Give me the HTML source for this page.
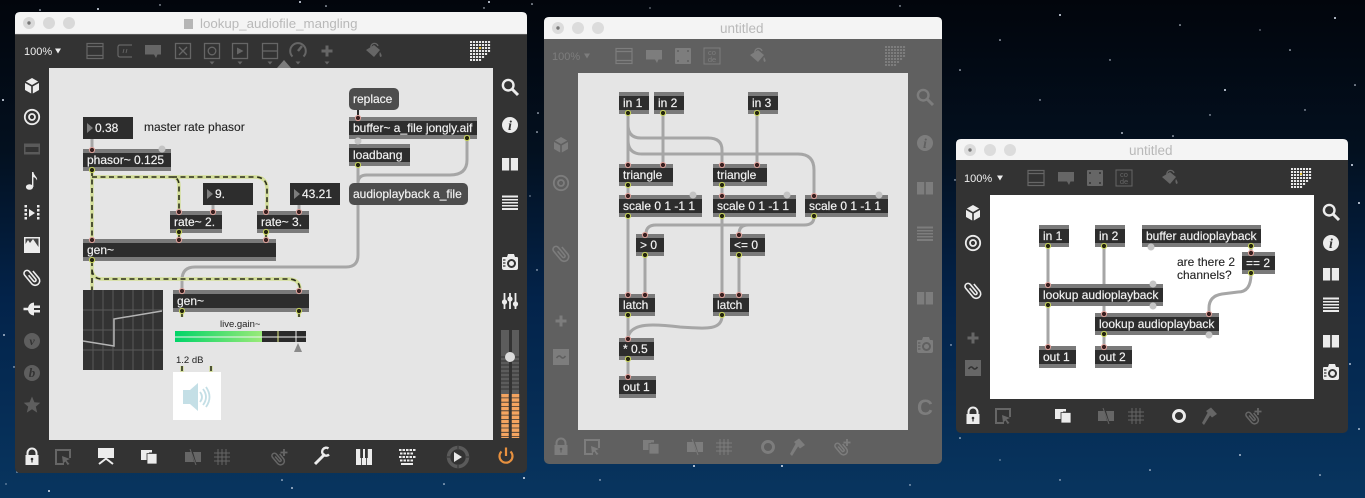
<!DOCTYPE html>
<html><head><meta charset="utf-8"><title>Max patches</title>
<style>
html,body{margin:0;padding:0;width:1365px;height:498px;overflow:hidden;background:#04152c}
svg{display:block;position:absolute;left:0;top:0}
text{font-family:"Liberation Sans",sans-serif;font-size:12px}
.t{fill:#f2f2f2;stroke:#f2f2f2;stroke-width:.18}.k{fill:#222;stroke:#222;stroke-width:.1}
.g{fill:#7a7a7a}.d{fill:#2d2d2d}.m{fill:#4d4d4d}
.c{fill:none;stroke:#a6a6a6;stroke-width:3}
.s1{fill:none;stroke:#d3de98;stroke-width:3.4}
.s2{fill:none;stroke:#2c2f1c;stroke-width:1.6;stroke-dasharray:5 3.5}
.sd{fill:none;stroke:#2a2a2a;stroke-width:2}
.ttl{font-size:13.5px;fill:#b9b9b9}
.pc{font-size:11px;-webkit-text-stroke:.2px currentColor}
</style></head><body>
<svg width="1365" height="498" viewBox="0 0 1365 498">
<defs>
<linearGradient id="sky" x1="0" y1="0" x2="0" y2="1"><stop offset="0" stop-color="#02050c"/><stop offset=".3" stop-color="#03101f"/><stop offset=".6" stop-color="#03234a"/><stop offset="1" stop-color="#08355f"/></linearGradient>
<linearGradient id="gr" x1="0" x2="1" y1="0" y2="0"><stop offset="0" stop-color="#00d468"/><stop offset="1" stop-color="#9aea78"/></linearGradient>
<g id="in"><circle r="2.6" fill="#3a2020" stroke="#dfa39c" stroke-width="1"/></g>
<g id="out"><circle r="2.6" fill="#252510" stroke="#c8d45c" stroke-width="1"/></g>
<g id="lint"><circle r="3.5" fill="#c4c4c4"/></g>
<g id="cube"><path fill="currentColor" d="M0-8 7-4V4L0 8-7 4V-4Z"/><path d="M-7-4 0 0 7-4M0 0V8" stroke="var(--bg)" stroke-width="1.6" fill="none"/></g>
<g id="target" fill="none" stroke="currentColor"><circle r="7.2" stroke-width="1.8"/><circle r="3" stroke-width="1.8"/></g>
<g id="tile" fill="currentColor"><path d="M-8-5.5H8V5.5H-8ZM-6.5-2V3H6.5V-2Z" fill-rule="evenodd"/></g>
<g id="note" fill="currentColor"><ellipse cx="-2.5" cy="6" rx="3.6" ry="2.8"/><path d="M0 6V-9H1.4C2 -5 6-4 5-.5 4-3 2.5-3.5 1.4-4V6Z"/></g>
<g id="seq" fill="currentColor"><path d="M-3-4 3 0-3 4Z"/><path d="M-7.5-8h2.5v2.5h-2.5zM-7.5-4h2.5v2.5h-2.5zM-7.5 0h2.5v2.5h-2.5zM-7.5 4h2.5v2.5h-2.5zM5-8h2.5v2.5h-2.5zM5-4h2.5v2.5h-2.5zM5 0h2.5v2.5h-2.5zM5 4h2.5v2.5h-2.5z"/></g>
<g id="image"><path fill="currentColor" d="M-8-8H8V8H-8Z"/><path fill="var(--bg)" d="M-6.5-1-4-5-2-2 1-6 6.5 2V-6.5H-6.5Z" opacity=".9"/></g>
<g id="clip"><path fill="none" stroke="currentColor" stroke-width="1.6" d="M-1.500-3.500V4a1.500 1.500 0 0 0 3 0V-6a3 3 0 0 0-6 0V5a4.500 4.500 0 0 0 9 0V-4" transform="rotate(-40)"/></g>
<g id="plug" fill="currentColor"><path d="M-8.500-1.200H-4Q-3-6 2-6.500V-3.500H8V-1H2V1H8V3.500H2V6.500Q-3 6-4 1.200H-8.500Z"/></g>
<g id="star" fill="currentColor"><path d="M0-8.500 2.400-2.800 8.300-2.300 3.800 1.600 5.200 7.600 0 4.300-5.200 7.600-3.800 1.600-8.300-2.300-2.400-2.800Z"/></g>
<g id="search" fill="none" stroke="currentColor"><circle cx="-1.800" cy="-1.800" r="5.300" stroke-width="2.400"/><path d="M2 2 8 8" stroke-width="3"/></g>
<g id="book" fill="currentColor"><path d="M-8-6H-.8V6.500H-8ZM.8-6H8V6.500H.8Z"/></g>
<g id="list" fill="currentColor"><path d="M-8-7.500H8V-5.500H-8ZM-8-4H8V-2.500H-8ZM-8-1H8V.5H-8ZM-8 2H8V3.500H-8ZM-8 5H8V7H-8Z"/></g>
<g id="cam"><path fill="currentColor" d="M-8-4Q-8-5-7-5H-3L-2-8H4L5-5H7Q8-5 8-4V6Q8 8 6 8H-6Q-8 8-8 6Z"/><circle cx="1.500" cy="1.500" r="3.500" fill="none" stroke="var(--bg)" stroke-width="2"/><path d="M-7-2H-4.500M-7 1H-4.500M-7 4H-4.500" stroke="var(--bg)" stroke-width="1.200"/></g>
<g id="mix" fill="currentColor"><path d="M-5.500-8V8M0-8V8M5.500-8V8" stroke="currentColor" stroke-width="1.800"/><circle cx="-5.500" cy="1" r="2.600"/><circle cx="0" cy="-2" r="2.600"/><circle cx="5.500" cy="3" r="2.600"/></g>
<g id="lock" fill="currentColor"><path d="M-4.500-2V-4A4.500 4.500 0 0 1 4.500-4V-2" fill="none" stroke="currentColor" stroke-width="2"/><path d="M-6.500-2H6.500V8H-6.500Z"/><circle cy="2" r="1.300" fill="var(--bg)"/><path d="M-.6 2H.6V5.500H-.6Z" fill="var(--bg)"/></g>
<g id="cursor" fill="none" stroke="currentColor" stroke-width="2"><path d="M1 7H-7V-7H7V1"/><path d="M-1-1 7 2 3.500 3.500 6.500 7 4.500 8 2.500 4.500 0 6.500Z" fill="currentColor" stroke="none"/></g>
<g id="pres" fill="currentColor"><path d="M-8-8H8V2H-8Z"/><path d="M-7 8-.5 3H.5L7 8" fill="none" stroke="currentColor" stroke-width="2"/></g>
<g id="wins" fill="currentColor"><path d="M-8-7H3V-4.500H0V3H-8Z"/><path d="M-2-3.500H8V7H-2Z" stroke="var(--bg)" stroke-width=".8"/></g>
<g id="flag" fill="currentColor"><path d="M-8-5H-2L1 5H-8ZM0-5H8V5H3Z"/><path d="M-3-8 3 8" stroke="currentColor" stroke-width="1"/></g>
<g id="grid" fill="none" stroke="currentColor" stroke-width="1"><path d="M-4-8V8M0-8V8M4-8V8M-8-4H8M-8 0H8M-8 4H8"/></g>
<g id="clipp"><path fill="none" stroke="currentColor" stroke-width="1.500" d="M-1.200-3V3a1.200 1.200 0 0 0 2.400 0V-4a2.500 2.500 0 0 0-5 0V4a3.800 3.800 0 0 0 7.600 0V-2" transform="translate(-1 1) rotate(-40)"/><path d="M5-8V-1M1.500-4.500H8.500" stroke="currentColor" stroke-width="1.800"/></g>
<g id="wrench"><path fill="none" stroke="currentColor" stroke-width="3" d="M-7 8 3-2"/><path fill="none" stroke="currentColor" stroke-width="2.400" d="M6.500-7.500A4 4 0 1 0 7-1.500"/></g>
<g id="piano"><rect x="-8" y="-8" width="16" height="16" fill="currentColor"/><path d="M-3.800-8H-1V1H-3.800ZM1-8H3.800V1H1Z" fill="var(--bg)"/><path d="M-2.400 1V8M2.400 1V8" stroke="var(--bg)" stroke-width=".8"/></g>
<g id="kbd" fill="currentColor"><path d="M-8-8h2.500v2h-2.500zM-4.500-8h2.500v2h-2.500zM-1-8h2.500v2h-2.500zM2.500-8h2.500v2h-2.500zM6-8h2.500v2h-2.500zM-7-4.500h2.500v2h-2.500zM-3.500-4.500h2.500v2h-2.500zM0-4.500h2.500v2h-2.500zM3.500-4.500h2.500v2h-2.500zM-8-1h2.500v2h-2.500zM-4.500-1h2.500v2h-2.500zM-1-1h2.500v2h-2.500zM2.500-1h2.500v2h-2.500zM6-1h2.500v2h-2.500zM-7 2.500h2.500v2h-2.500zM-3.500 2.500h2.500v2h-2.500zM0 2.500h2.500v2h-2.500zM3.500 2.500h2.500v2h-2.500zM-6 6h12v2h-12z"/></g>
<g id="ring"><circle r="5.500" fill="none" stroke="currentColor" stroke-width="2.900"/></g>
<g id="hammer" fill="currentColor"><path d="M-7 7-5 9 2-2-1-4Z"/><path d="M-3-5 2-8.500 8-2 3 1.500Z"/></g>
<g id="tilebox" fill="none" stroke="currentColor" stroke-width="1.200"><rect x="-8" y="-7.500" width="16" height="15"/><path d="M-8-4.500H8M-8 4.500H8"/></g>
<g id="mbox" fill="none" stroke="currentColor" stroke-width="1.200"><path d="M7 6H-5Q-7 6-7 4V-4Q-7-6-5-6H7"/><path d="M-2 2-1-2M1 2 2-2" stroke-width=".9"/></g>
<g id="cmt" fill="currentColor"><path d="M-8-6H8V3.500H4.500L3 7 1 3.500H-8Z"/></g>
<g id="xbox" fill="none" stroke="currentColor" stroke-width="1.300"><rect x="-7.500" y="-7.500" width="15" height="15"/><path d="M-4-4 4 4M4-4-4 4"/></g>
<g id="bbox" fill="none" stroke="currentColor" stroke-width="1.300"><rect x="-7.500" y="-7.500" width="15" height="15"/><circle r="3.800"/></g>
<g id="pbox" stroke="currentColor" stroke-width="1.300"><rect x="-7.500" y="-7.500" width="15" height="15" fill="none"/><path d="M-3-3.500 3.500 0-3 3.500Z" fill="currentColor" stroke="none"/></g>
<g id="sbox" fill="none" stroke="currentColor" stroke-width="1.300"><rect x="-7.500" y="-7.500" width="15" height="15"/><path d="M-7.500 0H7.500"/></g>
<g id="dial" fill="none" stroke="currentColor" stroke-width="2"><path d="M-5.500 5.500A7.800 7.800 0 1 1 5.500 5.500"/><path d="M0 0 4-5" stroke-width="2.400"/></g>
<g id="plus"><path d="M-5.500 0H5.500M0-5.500V5.500" stroke="currentColor" stroke-width="3"/></g>
<g id="tri"><path d="M-2.500-1.500H2.500L0 1.500Z" fill="currentColor"/></g>
<g id="tri2"><path d="M-3-2.500H3L0 2.500Z" fill="currentColor"/></g>
<g id="paint" fill="currentColor"><path d="M-8-1 0-6 6-1 0 6Z"/><path d="M-3-3A3.500 3.500 0 0 1 4-5" fill="none" stroke="currentColor" stroke-width="1.300"/><path d="M6 1C7 3 8.500 4.500 7 6 5.500 6 5 3 6 1Z"/></g>
<g id="dot" fill="currentColor"><rect x="-8" y="-8" width="16" height="16" rx="1"/><circle cx="-5" cy="-5" r="1" fill="var(--bg)"/><circle cx="5" cy="-5" r="1" fill="var(--bg)"/><circle cx="-5" cy="5" r="1" fill="var(--bg)"/><circle cx="5" cy="5" r="1" fill="var(--bg)"/></g>
<g id="tilde"><rect x="-8" y="-8" width="16" height="16" fill="currentColor"/><path d="M-4.500 1Q-2-2.500 0 0T4.500-1" fill="none" stroke="var(--bg)" stroke-width="1.600"/></g>
<g id="logo" fill="none" stroke="currentColor" stroke-width="2.100" stroke-dasharray="2.100 .9"><path d="M-10-9H10.500M-10-6H10.500M-10-3H10.500M-10 0H10.500M-10 3H7.500M-10 6H4.500M-10 9H1.500"/></g>
</defs>

<rect width="1365" height="498" fill="url(#sky)"/>
<g fill="#dfe8f5">
<circle cx="40" cy="10" r=".8"/><circle cx="98" cy="9" r="1"/><circle cx="160" cy="5" r=".7"/><circle cx="300" cy="2" r="1"/><circle cx="326" cy="6" r=".8"/><circle cx="489" cy="2" r="1"/><circle cx="484" cy="8" r=".7"/><circle cx="532" cy="4" r=".8"/><circle cx="3" cy="100" r="1"/><circle cx="538" cy="113" r=".8"/><circle cx="537" cy="132" r=".8"/><circle cx="4" cy="335" r=".9"/><circle cx="14" cy="367" r=".7"/><circle cx="49" cy="491" r="1"/><circle cx="17" cy="472" r=".7"/><circle cx="6" cy="484" r=".6"/><circle cx="282" cy="480" r=".8"/><circle cx="292" cy="488" r=".9"/><circle cx="444" cy="484" r=".8"/><circle cx="524" cy="478" r="1"/><circle cx="530" cy="196" r=".6"/><circle cx="537" cy="270" r=".7"/><circle cx="694" cy="466" r="1"/><circle cx="782" cy="466" r="1"/><circle cx="955" cy="180" r=".7"/><circle cx="951" cy="345" r=".7"/><circle cx="960" cy="438" r=".8"/><circle cx="1122" cy="133" r=".9"/><circle cx="1173" cy="136" r=".8"/><circle cx="1352" cy="165" r="1"/><circle cx="1359" cy="203" r="1"/><circle cx="1350" cy="364" r=".9"/><circle cx="1359" cy="429" r=".9"/><circle cx="1000" cy="40" r=".8"/><circle cx="1060" cy="15" r="1"/><circle cx="1110" cy="60" r=".7"/><circle cx="1180" cy="25" r=".8"/><circle cx="1225" cy="90" r="1"/><circle cx="1290" cy="50" r=".8"/><circle cx="1335" cy="18" r="1"/><circle cx="1305" cy="110" r=".7"/><circle cx="960" cy="70" r=".8"/><circle cx="1355" cy="85" r=".8"/><circle cx="1040" cy="100" r=".7"/><circle cx="1260" cy="30" r=".6"/><circle cx="1150" cy="470" r=".8"/><circle cx="1240" cy="455" r=".9"/><circle cx="1060" cy="480" r=".7"/><circle cx="1320" cy="475" r=".8"/><circle cx="1000" cy="460" r=".6"/><circle cx="910" cy="485" r=".7"/><circle cx="600" cy="480" r=".7"/><circle cx="1210" cy="115" r=".7"/><circle cx="650" cy="8" r=".6"/><circle cx="900" cy="6" r=".7"/>
</g>

<!-- WINDOW 1 -->
<g style="--bg:#333333">
<rect x="15" y="12" width="512" height="461" rx="5" fill="#333"/>
<path d="M15 34V17Q15 12 20 12H522Q527 12 527 17V34Z" fill="#f4f4f4"/>
<path d="M15 34H527" stroke="#c9c9c9" stroke-width=".6"/>
<circle cx="29" cy="23" r="6" fill="#d9d9d9"/><circle cx="29" cy="23" r="1.700" fill="#777"/><circle cx="49" cy="23" r="6" fill="#d9d9d9"/><circle cx="69" cy="23" r="6" fill="#d9d9d9"/>
<rect x="184" y="19" width="9" height="10" fill="#b5b5b5"/>
<text class="ttl" x="200" y="28" style="font-size:13.3px">lookup_audiofile_mangling</text>
<rect x="49" y="68" width="444" height="372" fill="#e5e5e5"/>
<text class="pc" x="24" y="55" style="color:#eee" fill="#eee">100%</text>
<use href="#tri2" x="58" y="51" color="#eee"/>
<g color="#666">
<use href="#tilebox" x="95" y="51"/><use href="#mbox" x="125" y="51"/><use href="#cmt" x="153" y="51"/><use href="#xbox" x="183" y="51"/><use href="#bbox" x="212" y="51"/><use href="#pbox" x="240" y="51"/><use href="#sbox" x="270" y="51"/><use href="#dial" x="298" y="51"/><use href="#plus" x="327" y="51"/><use href="#paint" x="374" y="51"/>
<use href="#tri" x="212" y="63"/><use href="#tri" x="240" y="63"/><use href="#tri" x="270" y="63"/><use href="#tri" x="298" y="63"/><use href="#tri" x="327" y="63"/>
</g>
<path d="M277 68 284 60 291 68Z" fill="#7d7d7d"/>
<use href="#logo" x="480" y="51" color="#e8e8e8"/><rect x="479" y="47" width="2.100" height="2.100" fill="#e8c23a"/>
<g color="#ececec"><use href="#cube" x="32" y="86"/><use href="#target" x="32" y="117"/><use href="#note" x="32" y="181"/><use href="#seq" x="32" y="213"/><use href="#image" x="32" y="245"/><use href="#clip" x="32" y="277"/><use href="#plug" x="32" y="309"/>
<use href="#search" x="510" y="87"/><circle cx="510" cy="125" r="8" fill="#ececec"/><use href="#book" x="510" y="164"/><use href="#list" x="510" y="203"/><use href="#cam" x="510" y="262"/><use href="#mix" x="510" y="301"/></g>
<text x="510" y="130" text-anchor="middle" style="font:italic bold 14px 'Liberation Serif',serif" fill="#333">i</text>
<use href="#tile" x="32" y="149" color="#5a5a5a"/>
<circle cx="32" cy="341" r="8" fill="#5e5e5e"/><text x="32" y="345" text-anchor="middle" style="font:italic bold 12px 'Liberation Serif',serif" fill="#333">v</text>
<circle cx="32" cy="373" r="8" fill="#5e5e5e"/><text x="32" y="377" text-anchor="middle" style="font:italic bold 13px 'Liberation Serif',serif" fill="#333">b</text>
<use href="#star" x="32" y="405" color="#5e5e5e"/>
<!-- levels -->
<rect x="501" y="330" width="8" height="65" fill="#5c5c5c"/><rect x="512" y="330" width="7" height="65" fill="#5c5c5c"/>
<path d="M501 357H519M501 361H519M501 365H519M501 369H519M501 373H519M501 377H519M501 381H519M501 385H519M501 389H519" stroke="#333" stroke-width="1"/>
<path d="M505 394V438M515.500 394V438" fill="none" stroke="#f4a460" stroke-width="7.500" stroke-dasharray="3.500 .8"/>
<circle cx="510" cy="357" r="5" fill="#dcdcdc"/>
<!-- bottom -->
<g color="#ececec"><use href="#lock" x="32" y="457"/><use href="#pres" x="106" y="456"/><use href="#wins" x="149" y="457"/><use href="#wrench" x="322" y="456"/><use href="#piano" x="364" y="457"/><use href="#kbd" x="407" y="457"/></g>
<g color="#666"><use href="#cursor" x="63" y="457"/><use href="#flag" x="193" y="457"/><use href="#grid" x="222" y="457"/><use href="#clipp" x="279" y="457"/></g>
<circle cx="458" cy="457" r="9.500" fill="none" stroke="#5a5a5a" stroke-width="3.500"/><path d="M458 446V449M458 465V468M447 457H450M466 457H469" stroke="#333" stroke-width="1"/><path d="M454 452 462 457 454 462Z" fill="#e8e8e8"/>
<path d="M501.500 451.500A6.500 6.500 0 1 0 510.500 451.500M506 447.500V456" fill="none" stroke="#e8913f" stroke-width="2.200"/>

<!-- cords W1 -->
<path class="c" d="M92 139V149" /><path class="c" d="M213 205V211M299 205V211"/>
<path class="c" d="M358 205V255Q358 267 346 267H195Q182 267 182 280V290"/>
<path class="c" d="M358 166V183M467 139V160Q467 175 450 175H367Q358 175 358 183"/>
<path class="sd" d="M358 110V118" stroke-width="3"/>
<path class="s1" id="a" d="M92 171V239M92 177H172Q179 177 179 186V211M172 177H255Q267 177 267 189V211M179 233V239M266 233V239M92 261V290M92 270Q93 279 102 279H288Q300 279 300 290M182 312V317M299 312V317M182 366V372M211 366V372"/>
<path class="s2" d="M92 171V239M92 177H172Q179 177 179 186V211M172 177H255Q267 177 267 189V211M179 233V239M266 233V239M92 261V290M92 270Q93 279 102 279H288Q300 279 300 290M182 312V317M299 312V317M182 366V372M211 366V372"/>
<!-- objects W1 -->
<rect class="d" x="83" y="117" width="50" height="22"/><path d="M87 123V133L93 128Z" fill="#7d7d7d"/><text class="t" x="95" y="132">0.38</text>
<text class="k" x="144" y="131">master rate phasor</text>
<rect class="g" x="83" y="149" width="88" height="22"/><rect class="d" x="83" y="153" width="88" height="14"/><text class="t" x="87" y="164">phasor~ 0.125</text>
<rect class="d" x="203" y="183" width="50" height="22"/><path d="M207 189V199L213 194Z" fill="#7d7d7d"/><text class="t" x="215" y="198">9.</text>
<rect class="d" x="290" y="183" width="50" height="22"/><path d="M294 189V199L300 194Z" fill="#7d7d7d"/><text class="t" x="302" y="198">43.21</text>
<rect class="g" x="170" y="211" width="52" height="22"/><rect class="d" x="170" y="215" width="52" height="14"/><text class="t" x="174" y="226">rate~ 2.</text>
<rect class="g" x="257" y="211" width="52" height="22"/><rect class="d" x="257" y="215" width="52" height="14"/><text class="t" x="261" y="226">rate~ 3.</text>
<rect class="g" x="83" y="239" width="193" height="22"/><rect class="d" x="83" y="243" width="193" height="14"/><text class="t" x="87" y="254">gen~</text>
<rect class="g" x="173" y="290" width="136" height="22"/><rect class="d" x="173" y="294" width="136" height="14"/><text class="t" x="177" y="305">gen~</text>
<rect class="m" x="349" y="88" width="50" height="22" rx="5"/><text class="t" x="353" y="103">replace</text>
<rect class="g" x="349" y="117" width="128" height="22"/><rect class="d" x="349" y="121" width="128" height="14"/><text class="t" x="353" y="132">buffer~ a_file jongly.aif</text>
<rect class="g" x="349" y="144" width="61" height="22"/><rect class="d" x="349" y="148" width="61" height="14"/><text class="t" x="353" y="159">loadbang</text>
<rect class="m" x="349" y="183" width="119" height="22" rx="5"/><text class="t" x="353" y="198">audioplayback a_file</text>
<use href="#lint" x="358" y="141"/><use href="#lint" x="162" y="149"/>
<use href="#in" x="92" y="150"/><use href="#out" x="92" y="170"/><use href="#in" x="179" y="212"/><use href="#in" x="213" y="212"/><use href="#out" x="179" y="232"/><use href="#in" x="266" y="212"/><use href="#in" x="299" y="212"/><use href="#out" x="266" y="232"/><use href="#in" x="92" y="240"/><use href="#in" x="179" y="240"/><use href="#in" x="266" y="240"/><use href="#out" x="92" y="260"/><use href="#in" x="182" y="291"/><use href="#in" x="299" y="291"/><use href="#out" x="182" y="311"/><use href="#out" x="299" y="311"/><use href="#in" x="358" y="118"/><use href="#out" x="467" y="138"/><use href="#out" x="358" y="165"/>
<!-- scope -->
<rect x="83" y="290" width="80" height="80" fill="#333"/>
<path d="M93 290V370M103 290V370M113 290V370M123 290V370M133 290V370M143 290V370M153 290V370M83 310H163M83 330H163M83 350H163" stroke="#585858" stroke-width="1"/>
<path d="M83 341 114 346V319L162 311" fill="none" stroke="#b4b4b4" stroke-width="1.500"/>
<!-- gain -->
<text x="220" y="327" style="font-size:9.500px" fill="#222">live.gain~</text>
<rect x="175" y="331" width="131" height="11" fill="#2a2a2a"/><rect x="175" y="331" width="87" height="11" fill="url(#gr)"/>
<path d="M175 337H306" stroke="#f2f2f2" stroke-width="1"/><path d="M278 331V342" stroke="#e6f08a"/><path d="M296 331V342" stroke="#eee"/>
<path d="M298 343 302 352H294Z" fill="#8a8a8a"/>
<text x="176" y="363" style="font-size:9.500px" fill="#222">1.2 dB</text>
<rect x="173" y="372" width="48" height="48" fill="#fff"/>
<path d="M183 390H190L198 383V411L190 404H183Z" fill="#c4dfe6"/>
<path d="M200 392Q204 397 200 402M203 389Q209 397 203 405M206 387Q213 397 206 407" fill="none" stroke="#c4dfe6" stroke-width="1.800"/>
</g>

<!-- WINDOW 2 -->
<g style="--bg:#606060">
<rect x="544" y="17" width="398" height="447" rx="5" fill="#606060"/>
<path d="M544 39V22Q544 17 549 17H937Q942 17 942 22V39Z" fill="#f4f4f4"/>
<circle cx="558" cy="28" r="6" fill="#dcdcdc"/><circle cx="558" cy="28" r="1.700" fill="#777"/><circle cx="578" cy="28" r="6" fill="#dcdcdc"/><circle cx="598" cy="28" r="6" fill="#dcdcdc"/>
<text class="ttl" x="720" y="33">untitled</text>
<rect x="578" y="73" width="330" height="357" fill="#e5e5e5"/>
<g color="#7d7d7d">
<text class="pc" x="552" y="60" fill="#7d7d7d">100%</text><use href="#tri2" x="587" y="56"/>
<use href="#tilebox" x="624" y="56"/><use href="#cmt" x="654" y="56"/><use href="#dot" x="683" y="56"/>
<rect x="704" y="48" width="16" height="16" fill="none" stroke="#7d7d7d"/><text x="712" y="55" text-anchor="middle" style="font-size:7.500px" fill="#7d7d7d">co</text><text x="712" y="62" text-anchor="middle" style="font-size:7.500px" fill="#7d7d7d">de</text>
<use href="#paint" x="758" y="56"/><use href="#logo" x="895" y="56"/>
<use href="#cube" x="561" y="145"/><use href="#target" x="561" y="183"/><use href="#clip" x="561" y="253"/><use href="#plus" x="561" y="321"/><use href="#tilde" x="561" y="357"/>
<use href="#search" x="925" y="97"/><circle cx="925" cy="143" r="8" fill="#7d7d7d"/><use href="#book" x="925" y="188"/><use href="#list" x="925" y="234"/><use href="#book" x="925" y="298"/><use href="#cam" x="925" y="345"/>
<text x="925" y="415" text-anchor="middle" style="font-size:22px;font-weight:bold" fill="#7d7d7d">C</text>
<use href="#lock" x="561" y="447"/><use href="#cursor" x="592" y="447"/><use href="#wins" x="651" y="447"/><use href="#flag" x="695" y="447"/><use href="#grid" x="724" y="447"/><use href="#ring" x="768" y="447"/><use href="#hammer" x="797" y="447"/><use href="#clipp" x="842" y="447"/>
</g>
<text x="925" y="148" text-anchor="middle" style="font:italic bold 14px 'Liberation Serif',serif" fill="#606060">i</text>

<path class="c" d="M628 114V164M663 114V164M757 114V164M628 125Q628 138 641 138H708Q722 138 722 150V164M628 140Q628 154 642 154H798Q814 154 814 170V195M628 186V195M722 186V195M628 217V294M722 217V294M645 256V294M739 256V294M814 217Q814 225 804 225H656Q646 225 646 234M748 225Q739 225 739 234M628 316V338M722 316C722 332 700 328 680 327 655 324 630 322 628 338M628 360V376"/>
<rect class="g" x="619" y="92" width="30" height="22"/><rect class="d" x="619" y="96" width="30" height="14"/><text class="t" x="623" y="107">in 1</text>
<rect class="g" x="654" y="92" width="30" height="22"/><rect class="d" x="654" y="96" width="30" height="14"/><text class="t" x="658" y="107">in 2</text>
<rect class="g" x="748" y="92" width="30" height="22"/><rect class="d" x="748" y="96" width="30" height="14"/><text class="t" x="752" y="107">in 3</text>
<rect class="g" x="619" y="164" width="54" height="22"/><rect class="d" x="619" y="168" width="54" height="14"/><text class="t" x="623" y="179">triangle</text>
<rect class="g" x="713" y="164" width="54" height="22"/><rect class="d" x="713" y="168" width="54" height="14"/><text class="t" x="717" y="179">triangle</text>
<rect class="g" x="619" y="195" width="83" height="22"/><rect class="d" x="619" y="199" width="83" height="14"/><text class="t" x="623" y="210">scale 0 1 -1 1</text>
<rect class="g" x="713" y="195" width="83" height="22"/><rect class="d" x="713" y="199" width="83" height="14"/><text class="t" x="717" y="210">scale 0 1 -1 1</text>
<rect class="g" x="805" y="195" width="83" height="22"/><rect class="d" x="805" y="199" width="83" height="14"/><text class="t" x="809" y="210">scale 0 1 -1 1</text>
<rect class="g" x="636" y="234" width="28" height="22"/><rect class="d" x="636" y="238" width="28" height="14"/><text class="t" x="640" y="249">&gt; 0</text>
<rect class="g" x="730" y="234" width="35" height="22"/><rect class="d" x="730" y="238" width="35" height="14"/><text class="t" x="734" y="249">&lt;= 0</text>
<rect class="g" x="619" y="294" width="36" height="22"/><rect class="d" x="619" y="298" width="36" height="14"/><text class="t" x="623" y="309">latch</text>
<rect class="g" x="713" y="294" width="36" height="22"/><rect class="d" x="713" y="298" width="36" height="14"/><text class="t" x="717" y="309">latch</text>
<rect class="g" x="619" y="338" width="35" height="22"/><rect class="d" x="619" y="342" width="35" height="14"/><text class="t" x="623" y="353">* 0.5</text>
<rect class="g" x="619" y="376" width="37" height="22"/><rect class="d" x="619" y="380" width="37" height="14"/><text class="t" x="623" y="391">out 1</text>
<use href="#lint" x="693" y="195"/><use href="#lint" x="787" y="195"/><use href="#lint" x="879" y="195"/>
<use href="#out" x="628" y="113"/><use href="#out" x="663" y="113"/><use href="#out" x="757" y="113"/><use href="#in" x="628" y="165"/><use href="#in" x="663" y="165"/><use href="#in" x="722" y="165"/><use href="#in" x="757" y="165"/><use href="#out" x="628" y="185"/><use href="#out" x="722" y="185"/><use href="#in" x="628" y="196"/><use href="#in" x="722" y="196"/><use href="#in" x="814" y="196"/><use href="#out" x="628" y="216"/><use href="#out" x="722" y="216"/><use href="#out" x="814" y="216"/><use href="#in" x="645" y="235"/><use href="#in" x="739" y="235"/><use href="#out" x="645" y="255"/><use href="#out" x="739" y="255"/><use href="#in" x="628" y="295"/><use href="#in" x="645" y="295"/><use href="#in" x="722" y="295"/><use href="#in" x="739" y="295"/><use href="#out" x="628" y="315"/><use href="#out" x="722" y="315"/><use href="#in" x="628" y="339"/><use href="#out" x="628" y="359"/><use href="#in" x="628" y="377"/>
</g>

<!-- WINDOW 3 -->
<g style="--bg:#333333">
<rect x="956" y="139" width="392" height="294" rx="5" fill="#333"/>
<path d="M956 160V144Q956 139 961 139H1343Q1348 139 1348 144V160Z" fill="#f4f4f4"/>
<circle cx="970" cy="150" r="6" fill="#dcdcdc"/><circle cx="970" cy="150" r="1.700" fill="#777"/><circle cx="990" cy="150" r="6" fill="#dcdcdc"/><circle cx="1010" cy="150" r="6" fill="#dcdcdc"/>
<text class="ttl" x="1129" y="155">untitled</text>
<rect x="990" y="195" width="324" height="204" fill="#fff"/>
<text class="pc" x="964" y="182" fill="#eee">100%</text><use href="#tri2" x="1000" y="178" color="#eee"/>
<g color="#666"><use href="#tilebox" x="1036" y="178"/><use href="#cmt" x="1066" y="178"/><use href="#dot" x="1095" y="178"/>
<rect x="1116" y="170" width="16" height="16" fill="none" stroke="#666"/><text x="1124" y="177" text-anchor="middle" style="font-size:7.500px" fill="#666">co</text><text x="1124" y="184" text-anchor="middle" style="font-size:7.500px" fill="#666">de</text>
<use href="#paint" x="1170" y="178"/>
<use href="#plus" x="973" y="338"/><use href="#tilde" x="973" y="368"/>
<use href="#cursor" x="1003" y="416"/><use href="#flag" x="1106" y="416"/><use href="#grid" x="1136" y="416"/><use href="#hammer" x="1209" y="416"/><use href="#clipp" x="1253" y="416"/></g>
<use href="#logo" x="1301" y="178" color="#e8e8e8"/><rect x="1300" y="173" width="2.100" height="2.100" fill="#e8c23a"/>
<g color="#ececec"><use href="#cube" x="973" y="213"/><use href="#target" x="973" y="243"/><use href="#clip" x="973" y="290"/>
<use href="#search" x="1331" y="212"/><circle cx="1331" cy="243" r="8" fill="#ececec"/><use href="#book" x="1331" y="274"/><use href="#list" x="1331" y="305"/><use href="#book" x="1331" y="341"/><use href="#cam" x="1331" y="372"/>
<use href="#lock" x="973" y="416"/><use href="#wins" x="1063" y="416"/><use href="#ring" x="1179" y="416"/></g>
<text x="1331" y="248" text-anchor="middle" style="font:italic bold 14px 'Liberation Serif',serif" fill="#333">i</text>

<path class="c" d="M1048 247V284M1104 247V313M1048 306V346M1104 335V346M1251 247V252M1251 274Q1251 292 1238 292L1222 294Q1209 296 1209 308V313"/>
<rect class="g" x="1039" y="225" width="30" height="22"/><rect class="d" x="1039" y="229" width="30" height="14"/><text class="t" x="1043" y="240">in 1</text>
<rect class="g" x="1095" y="225" width="30" height="22"/><rect class="d" x="1095" y="229" width="30" height="14"/><text class="t" x="1099" y="240">in 2</text>
<rect class="g" x="1142" y="225" width="119" height="22"/><rect class="d" x="1142" y="229" width="119" height="14"/><text class="t" x="1146" y="240">buffer audioplayback</text>
<rect class="g" x="1242" y="252" width="33" height="22"/><rect class="d" x="1242" y="256" width="33" height="14"/><text class="t" x="1246" y="267">== 2</text>
<rect class="g" x="1039" y="284" width="124" height="22"/><rect class="d" x="1039" y="288" width="124" height="14"/><text class="t" x="1043" y="299">lookup audioplayback</text>
<rect class="g" x="1095" y="313" width="124" height="22"/><rect class="d" x="1095" y="317" width="124" height="14"/><text class="t" x="1099" y="328">lookup audioplayback</text>
<rect class="g" x="1039" y="346" width="37" height="22"/><rect class="d" x="1039" y="350" width="37" height="14"/><text class="t" x="1043" y="361">out 1</text>
<rect class="g" x="1095" y="346" width="37" height="22"/><rect class="d" x="1095" y="350" width="37" height="14"/><text class="t" x="1099" y="361">out 2</text>
<text class="k" x="1177" y="266">are there 2</text><text class="k" x="1177" y="279">channels?</text>
<use href="#lint" x="1151" y="247"/><use href="#lint" x="1153" y="284"/><use href="#lint" x="1153" y="306"/><use href="#lint" x="1209" y="335"/>
<use href="#out" x="1048" y="246"/><use href="#out" x="1104" y="246"/><use href="#out" x="1251" y="246"/><use href="#in" x="1251" y="253"/><use href="#out" x="1251" y="273"/><use href="#in" x="1048" y="285"/><use href="#out" x="1048" y="305"/><use href="#in" x="1104" y="314"/><use href="#in" x="1209" y="314"/><use href="#out" x="1104" y="334"/><use href="#in" x="1048" y="347"/><use href="#in" x="1104" y="347"/>
</g>
</svg>
</body></html>
